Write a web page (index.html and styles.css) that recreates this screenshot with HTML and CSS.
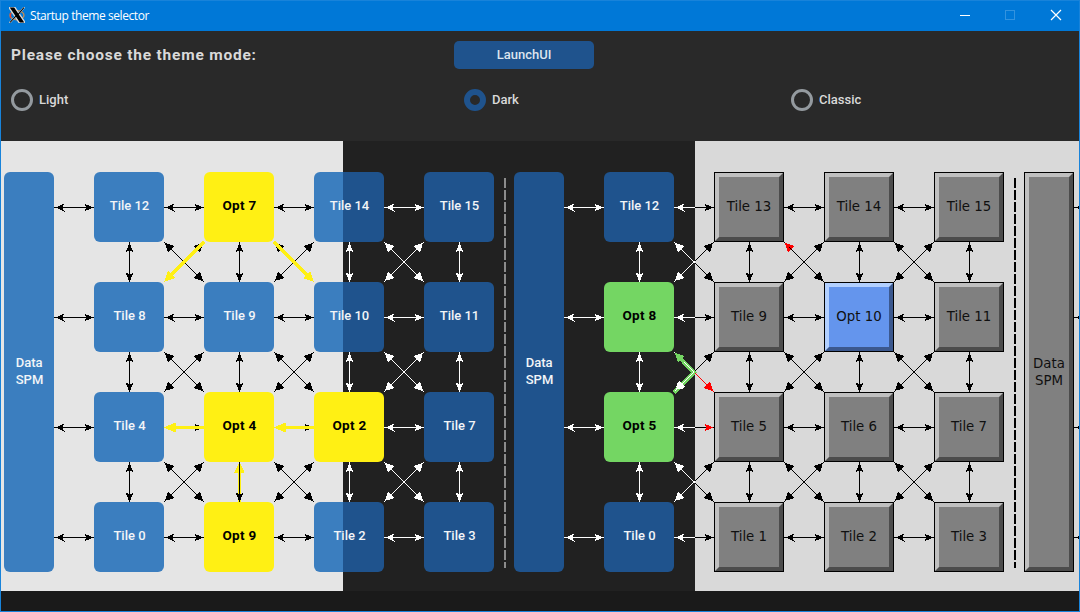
FILE: index.html
```html
<!DOCTYPE html>
<html lang="en">
<head>
<meta charset="utf-8">
<title>Startup theme selector</title>
<link rel="stylesheet" href="styles.css">
</head>
<body>
<div class="window">
  <header class="titlebar">
    <svg class="app-icon" width="16" height="16" viewBox="0 0 16 16">
      <ellipse cx="8" cy="8.3" rx="7" ry="4.6" fill="none" stroke="#c98a4b" stroke-width="1.3"/>
      <path d="M1.5 6v5" stroke="#e8432c" stroke-width="1.5"/>
      <path d="M0 0h5.4L16 16h-5.4zM15.500 0L9 7.500M7 9L.5 16" fill="#000" stroke="#d8d8d8" stroke-width="1.800"/>
      <path d="M.8 .5h4.300L15.200 15.500h-4.300z" fill="#000"/>
      <path d="M15 .5L9 7.600M6.800 9.200L1 15.500" stroke="#000" stroke-width="1.100"/>
    </svg>
    <span class="title">Startup theme selector</span>
    <div class="controls">
      <svg width="10" height="10" viewBox="0 0 10 10"><path d="M0 5.500h10" stroke="#fff"/></svg>
      <svg width="10" height="10" viewBox="0 0 10 10"><rect x=".5" y=".5" width="9" height="9" fill="none" stroke="#3393df"/></svg>
      <svg class="close" width="10" height="10" viewBox="0 0 10 10"><path d="M0 0l10 10M10 0L0 10" stroke="#fff" stroke-width="1.200"/></svg>
    </div>
  </header>

  <section class="chooser">
    <h1 class="prompt">Please choose the theme mode:</h1>
    <button class="launch">LaunchUI</button>
    <label class="option option-light"><i class="radio"></i><span>Light</span></label>
    <label class="option option-dark"><i class="radio radio-on"></i><span>Dark</span></label>
    <label class="option option-classic"><i class="radio"></i><span>Classic</span></label>
  </section>

  <main class="board">
    <svg class="links" width="1078" height="450" viewBox="1 141 1078 450" shape-rendering="crispEdges">
      <defs>
        <path id="tip-l" d="M1.500 .5L10.500 -3.500L8.300 .5L10.500 4.500z"/>
        <path id="tip-d" d="M1 1L10.700 4.200L7 7L4.200 10.700z"/>
        <g id="h">
          <rect width="40" height="1"/>
          <use href="#tip-l"/>
          <use href="#tip-l" transform="translate(40.500 0) scale(-1 1)"/>
        </g>
        <g id="v">
          <rect width="1" height="40"/>
          <path d="M.5 1L4.500 10.500L.5 8.300L-3.500 10.500zM.5 40L4.500 30.500L.5 32.500L-3.500 30.500z"/>
        </g>
        <g id="x">
          <path d="M0 0L40 40M40 0L0 40" fill="none" stroke="currentColor" stroke-width="1"/>
          <use href="#tip-d"/>
          <use href="#tip-d" transform="translate(40 0) scale(-1 1)"/>
          <use href="#tip-d" transform="translate(0 40) scale(1 -1)"/>
          <use href="#tip-d" transform="translate(40 40) scale(-1 -1)"/>
        </g>
        <g id="row">
          <use href="#h" x="54"/><use href="#h" x="164"/><use href="#h" x="274"/><use href="#h" x="384"/>
          <use href="#h" x="564"/><use href="#h" x="674"/><use href="#h" x="784"/><use href="#h" x="894"/>
          <use href="#h" x="1074"/>
        </g>
        <g id="gap">
          <use href="#v" x="129"/><use href="#v" x="239"/><use href="#v" x="349"/><use href="#v" x="459"/>
          <use href="#v" x="639"/><use href="#v" x="749"/><use href="#v" x="859"/><use href="#v" x="969"/>
          <use href="#x" x="164"/><use href="#x" x="274"/><use href="#x" x="384"/>
          <use href="#x" x="674"/><use href="#x" x="784"/><use href="#x" x="894"/>
        </g>
        <g id="mesh">
          <use href="#row" y="207"/><use href="#row" y="317"/><use href="#row" y="427"/><use href="#row" y="537"/>
          <use href="#gap" y="242"/><use href="#gap" y="352"/><use href="#gap" y="462"/>
        </g>
        <clipPath id="outer"><path d="M0 141h343v450H0zM695 141h385v450H695z"/></clipPath>
        <clipPath id="inner"><rect x="343" y="141" width="352" height="450"/></clipPath>
      </defs>
      <g class="ink-dark" clip-path="url(#outer)"><use href="#mesh"/></g>
      <g class="ink-light" clip-path="url(#inner)"><use href="#mesh"/></g>

      <path class="divider divider-gray" d="M505 178V568"/>
      <path class="divider" d="M1015 178V568"/>

      <g class="ink-yellow">
        <path class="route" d="M204 242L168 278M274 242L310 278"/>
        <path class="route route-straight" d="M204 427.500H170M314 427.500H280M239.500 502V468"/>
        <path d="M164 282l4-11 3.500 3.500 3.500 3.500zM314 282l-4-11-3.500 3.500-3.500 3.500zM163 427.500l12.500-5v10zM273 427.500l12.500-5v10zM239.500 461.500l5 11h-10z"/>
      </g>
      <g class="ink-dark">
        <rect x="239" y="462" width="1" height="40"/>
        <path d="M239.500 502l4-9.500l-4 2l-4-2z"/>
        <path d="M195 425h3v1h-3zM195 429h3v1h-3zM305 425h3v1h-3zM305 429h3v1h-3z"/>
      </g>

      <g class="ink-green">
        <path class="route" d="M678 356L694 372.500L674 392.500"/>
        <use href="#tip-d" x="674" y="352"/>
      </g>
      <g class="ink-light">
        <path d="M684 362L694 372L675 391" fill="none" stroke="currentColor"/>
        <use href="#tip-d" transform="translate(675 391) scale(1 -1)"/>
      </g>
      <g class="ink-red">
        <path d="M695 373L714 392" fill="none" stroke="currentColor"/>
        <use href="#tip-d" transform="translate(714 392) scale(-1 -1)"/>
        <use href="#tip-l" transform="translate(714.500 427) scale(-1 1)"/>
        <use href="#tip-d" x="784" y="242"/>
      </g>
      <path d="M789 247L795 253" stroke="#000"/>
    </svg>

    <div class="nodes">
      <div class="cluster">
        <div class="spm light"><span>Data<br>SPM</span></div>
        <div class="tiles tiles-4">
          <div class="tile light">Tile 12</div><div class="tile opt yellow">Opt 7</div><div class="tile split">Tile 14</div><div class="tile dark">Tile 15</div>
          <div class="tile light">Tile 8</div><div class="tile light">Tile 9</div><div class="tile split">Tile 10</div><div class="tile dark">Tile 11</div>
          <div class="tile light">Tile 4</div><div class="tile opt yellow">Opt 4</div><div class="tile opt yellow">Opt 2</div><div class="tile dark">Tile 7</div>
          <div class="tile light">Tile 0</div><div class="tile opt yellow">Opt 9</div><div class="tile split">Tile 2</div><div class="tile dark">Tile 3</div>
        </div>
      </div>
      <div class="cluster">
        <div class="spm dark"><span>Data<br>SPM</span></div>
        <div class="tiles tiles-4">
          <div class="tile dark">Tile 12</div><div class="tile classic">Tile 13</div><div class="tile classic">Tile 14</div><div class="tile classic">Tile 15</div>
          <div class="tile opt green">Opt 8</div><div class="tile classic">Tile 9</div><div class="tile classic classic-opt">Opt 10</div><div class="tile classic">Tile 11</div>
          <div class="tile opt green">Opt 5</div><div class="tile classic">Tile 5</div><div class="tile classic">Tile 6</div><div class="tile classic">Tile 7</div>
          <div class="tile dark">Tile 0</div><div class="tile classic">Tile 1</div><div class="tile classic">Tile 2</div><div class="tile classic">Tile 3</div>
        </div>
      </div>
      <div class="spm classic"><span>Data<br>SPM</span></div>
    </div>
  </main>
</div>
</body>
</html>
```
FILE: styles.css
```css
* { box-sizing: border-box; }
body { margin: 0; font-family: Roboto, sans-serif; }

.window {
  width: 1080px;
  height: 612px;
  border: 1px solid #1883da;
  background: #1a1a1a;
  overflow: hidden;
}

.titlebar {
  display: flex;
  align-items: center;
  height: 30px;
  padding: 0 18px 0 8px;
  background: #0078d7;
}
.app-icon { flex: none; margin-bottom: 2px; }
.title {
  margin-left: 5px;
  color: #fff;
  font: 12px/16px "Open Sans", sans-serif;
  letter-spacing: -0.42px;
  white-space: nowrap;
}
.controls { display: flex; gap: 35px; margin-left: auto; padding-bottom: 2px; }
.close { margin-left: 1px; overflow: visible; }

.chooser {
  display: grid;
  grid-template-columns: 453px 337px 1fr;
  grid-template-rows: 28px 22px;
  row-gap: 20px;
  height: 110px;
  padding-top: 10px;
  background: #292929;
  color: #d9d9d9;
}
.prompt {
  margin: 0 0 0 10px;
  font-size: 15.500px;
  font-weight: 700;
  line-height: 28px;
  letter-spacing: 0.780px;
  white-space: nowrap;
}
.launch {
  grid-column: 2 / 4;
  width: 140px;
  height: 28px;
  padding: 0 0 1px;
  border: 0;
  border-radius: 5px;
  background: #1f538d;
  color: #dce4ee;
  font: 500 13px/26px Roboto, sans-serif;
}
.option {
  display: flex;
  align-items: center;
  gap: 6px;
  font-size: 13px;
  font-weight: 500;
}
.option span { padding-bottom: 2px; }
.option-light { padding-left: 10px; }
.option-dark { padding-left: 10px; }
.radio {
  width: 22px;
  height: 22px;
  border: 3px solid #949a9f;
  border-radius: 50%;
}
.radio-on { border: 6px solid #1f538d; }

.board {
  position: relative;
  height: 450px;
  padding: 31px 0 0 3px;
  background: linear-gradient(90deg, #e5e5e5 342px, #212121 342px 694px, #d9d9d9 694px);
}
.links { position: absolute; left: 0; top: 0; }
.ink-dark { color: #000; fill: #000; }
.ink-light { color: #fff; fill: #fff; }
.ink-yellow { color: #fff014; fill: #fff014; }
.ink-green { color: #74d663; fill: #74d663; }
.ink-red { color: #f00; fill: #f00; }
.route { fill: none; stroke: currentColor; stroke-width: 4; }
.route-straight { stroke-width: 3; }
.divider { stroke: #000; stroke-width: 2; stroke-dasharray: 10 2; }
.divider-gray { stroke: #8c8c8c; }

.nodes { position: relative; display: flex; gap: 20px; width: 1070px; height: 400px; }
.cluster { display: flex; gap: 40px; }
.tiles { display: grid; gap: 40px; grid-auto-rows: 70px; }
.tiles-4 { grid-template-columns: repeat(4, 70px); }
.tile, .spm {
  display: flex;
  align-items: center;
  justify-content: center;
  padding: 0 0 3px 1px;
  border-radius: 6px;
  color: #f2f5f8;
  font-size: 13px;
  font-weight: 500;
  line-height: 17px;
}
.spm { width: 50px; flex: none; padding-bottom: 2px; }
.light { background: #3b7ebf; }
.dark { background: #1f538d; }
.split { background: linear-gradient(90deg, #3b7ebf 29px, #1f538d 29px); }
.opt { color: #000; font-size: 13.500px; font-weight: 700; letter-spacing: 0.3px; }
.yellow { background: #fff014; }
.green { background: #74d663; }
.classic {
  margin: 1px;
  padding: 0 0 1px;
  border: 4px solid;
  border-color: #bfbfbf #4c4c4c #4c4c4c #bfbfbf;
  border-radius: 0;
  outline: 1px solid #000;
  background: #808080;
  color: #101010;
  font-family: "DejaVu Sans", sans-serif;
  font-size: 13.330px;
  font-weight: 400;
  text-align: center;
}
.spm.classic { width: 48px; padding: 0; }
.classic-opt {
  border-color: #b2d0ff #3b588e #3b588e #b2d0ff;
  background: #6495ed;
}
```
